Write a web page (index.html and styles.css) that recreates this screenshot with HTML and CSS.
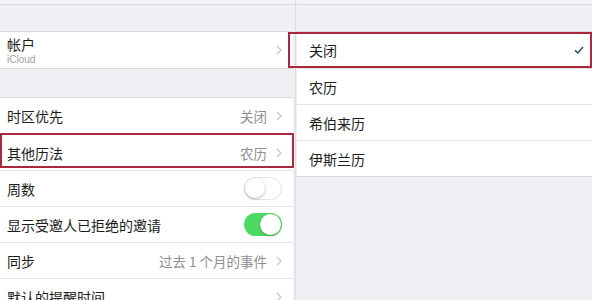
FILE: index.html
```html
<!DOCTYPE html>
<html lang="zh-CN">
<head>
<meta charset="utf-8">
<link rel="stylesheet" href="styles.css">
</head>
<body>
<div class="screen">
  <div class="pane left">
    <div class="topbar"></div>
    <div class="gap g1"></div>
    <div class="group">
      <div class="row account">
        <div class="labels">
          <div class="label">帐户</div>
          <div class="sub">iCloud</div>
        </div>
        <svg class="chev" viewBox="0 0 6 10"><path d="M1 1 L5 5 L1 9" fill="none" stroke="#c7c7cc" stroke-width="1.3"/></svg>
      </div>
    </div>
    <div class="gap g2"></div>
    <div class="group">
      <div class="row"><span class="label">时区优先</span><span class="value">关闭</span><svg class="chev" viewBox="0 0 6 10"><path d="M1 1 L5 5 L1 9" fill="none" stroke="#c7c7cc" stroke-width="1.3"/></svg></div>
      <div class="row"><span class="label">其他历法</span><span class="value">农历</span><svg class="chev" viewBox="0 0 6 10"><path d="M1 1 L5 5 L1 9" fill="none" stroke="#c7c7cc" stroke-width="1.3"/></svg></div>
      <div class="row"><span class="label">周数</span><span class="toggle off"><span class="knob"></span></span></div>
      <div class="row"><span class="label">显示受邀人已拒绝的邀请</span><span class="toggle on"><span class="knob"></span></span></div>
      <div class="row"><span class="label">同步</span><span class="value">过去 1 个月的事件</span><svg class="chev" viewBox="0 0 6 10"><path d="M1 1 L5 5 L1 9" fill="none" stroke="#c7c7cc" stroke-width="1.3"/></svg></div>
      <div class="row"><span class="label">默认的提醒时间</span><svg class="chev" viewBox="0 0 6 10"><path d="M1 1 L5 5 L1 9" fill="none" stroke="#c7c7cc" stroke-width="1.3"/></svg></div>
    </div>
  </div>
  <div class="pane right">
    <div class="topbar"></div>
    <div class="gap g1"></div>
    <div class="group">
      <div class="row opt"><span class="label">关闭</span><svg class="check" viewBox="0 0 10 8"><path d="M1 4.2 L3.8 7 L9 1" fill="none" stroke="#2c5573" stroke-width="1.6"/></svg></div>
      <div class="row opt"><span class="label">农历</span></div>
      <div class="row opt"><span class="label">希伯来历</span></div>
      <div class="row opt"><span class="label">伊斯兰历</span></div>
    </div>
  </div>
  <div class="mark mark-left"></div>
  <div class="mark mark-right"></div>
</div>
</body>
</html>
```
FILE: styles.css
```css
html, body {
  margin: 0;
  padding: 0;
  background: #efeff4;
}
.screen {
  position: relative;
  display: flex;
  width: 592px;
  height: 300px;
  overflow: hidden;
  font-family: "Noto Sans CJK SC", "Noto Sans", sans-serif;
  color: #1c1c1c;
}
.pane {
  background: #efeff4;
  display: flex;
  flex-direction: column;
}
.pane > * {
  flex: none;
}
.left {
  width: 295px;
  border-right: 1px solid #dcdce0;
}
.right {
  flex: 1;
  padding-left: 1px;
}
.topbar {
  height: 4px;
  background: #f4f4f7;
  border-bottom: 1px solid #d8d8dc;
}
.g1 { height: 26px; }
.g2 { height: 28px; }
.group {
  background: #fff;
  border-top: 1px solid #dadade;
  border-bottom: 1px solid #dadade;
}
.left .group { margin-right: 2px; }
.row {
  height: 36px;
  display: flex;
  align-items: center;
  padding: 0 11px 0 7px;
  box-sizing: border-box;
}
.row + .row {
  border-top: 1px solid #e2e2e6;
}
.label {
  font-size: 14px;
  flex: 1;
  white-space: nowrap;
}
.labels {
  flex: 1;
  display: flex;
  flex-direction: column;
  gap: 1px;
}
.labels .label {
  flex: none;
  font-size: 14px;
  line-height: 18px;
}
.sub {
  font-family: "Liberation Sans", sans-serif;
  font-size: 10px;
  line-height: 12px;
  color: #a0a0a5;
}
.value {
  font-size: 13.5px;
  color: #8e8e93;
  margin-right: 9px;
  white-space: nowrap;
}
.chev {
  width: 6px;
  height: 10px;
  flex: none;
}
.toggle {
  width: 38px;
  height: 23px;
  border-radius: 12px;
  box-sizing: border-box;
  position: relative;
  flex: none;
}
.toggle.off {
  border: 1.5px solid #e3e3e6;
  background: #fff;
}
.toggle.on {
  background: #4cd964;
}
.knob {
  position: absolute;
  top: 1px;
  width: 21px;
  height: 21px;
  border-radius: 50%;
  background: #fff;
  box-shadow: 0 1px 3px rgba(0,0,0,0.3);
}
.toggle.off .knob { left: 0; top: 0; width: 20px; height: 20px; }
.toggle.on .knob { right: 1px; }
.opt {
  padding: 0 8px 0 12px;
}
.check {
  width: 10px;
  height: 8px;
  flex: none;
}
.mark {
  position: absolute;
  border: 2.5px solid #a82a3c;
  box-sizing: border-box;
}
.mark-left {
  left: 0;
  top: 133px;
  width: 294px;
  height: 35px;
}
.mark-right {
  left: 288px;
  top: 32px;
  width: 304px;
  height: 36px;
}
```
